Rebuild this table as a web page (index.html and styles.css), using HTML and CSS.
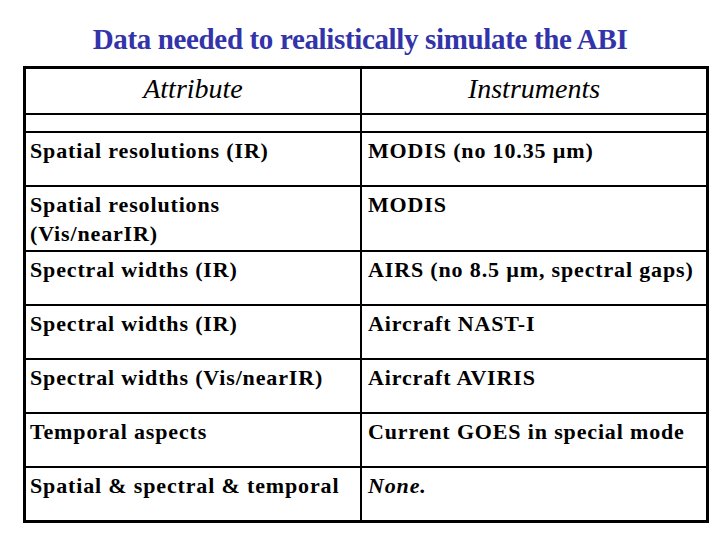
FILE: index.html
```html
<!DOCTYPE html>
<html>
<head>
<meta charset="utf-8">
<link rel="stylesheet" href="styles.css">
</head>
<body>
<h1 class="title">Data needed to realistically simulate the ABI</h1>
<table class="grid">
  <tr class="head"><th>Attribute</th><th>Instruments</th></tr>
  <tr class="spacer"><td></td><td></td></tr>
  <tr class="row"><td>Spatial resolutions (IR)</td><td>MODIS (no 10.35 µm)</td></tr>
  <tr class="row tall"><td>Spatial resolutions<br>(Vis/nearIR)</td><td>MODIS</td></tr>
  <tr class="row"><td>Spectral widths (IR)</td><td>AIRS (no 8.5 µm, spectral gaps)</td></tr>
  <tr class="row"><td>Spectral widths (IR)</td><td>Aircraft NAST-I</td></tr>
  <tr class="row"><td>Spectral widths (Vis/nearIR)</td><td>Aircraft AVIRIS</td></tr>
  <tr class="row"><td>Temporal aspects</td><td>Current GOES in special mode</td></tr>
  <tr class="row"><td>Spatial &amp; spectral &amp; temporal</td><td><em>None.</em></td></tr>
</table>
</body>
</html>
```
FILE: styles.css
```css
html, body {
  margin: 0;
  padding: 0;
  background: #ffffff;
}
body, h1, table, th, td, em {
  font-family: "Liberation Serif", "Times New Roman", serif;
  color: #000;
}
.title {
  margin: 21px 0 0 0;
  height: 45px;
  text-align: center;
  font-size: 29px;
  font-weight: bold;
  color: #3333aa;
  line-height: 36px;
  letter-spacing: -0.35px;
}
.grid {
  margin-left: 23px;
  width: 686px;
  border-collapse: collapse;
  border: 3px solid #000;
  table-layout: fixed;
}
.grid th, .grid td {
  border: 2px solid #000;
  vertical-align: top;
  padding: 0;
}
.grid th:first-child, .grid td:first-child {
  width: 334px;
}
.head th {
  height: 44px;
  font-style: italic;
  font-weight: normal;
  font-size: 28px;
  line-height: 40px;
  padding-top: 0;
}
.spacer td {
  height: 16px;
}
.row td {
  height: 49px;
  font-size: 22px;
  font-weight: bold;
  line-height: 29px;
  padding: 3px 0 0 4px;
  letter-spacing: 0.85px;
}
.row td:last-child {
  padding-left: 6px;
}
.row.tall td {
  height: 60px;
}
```
